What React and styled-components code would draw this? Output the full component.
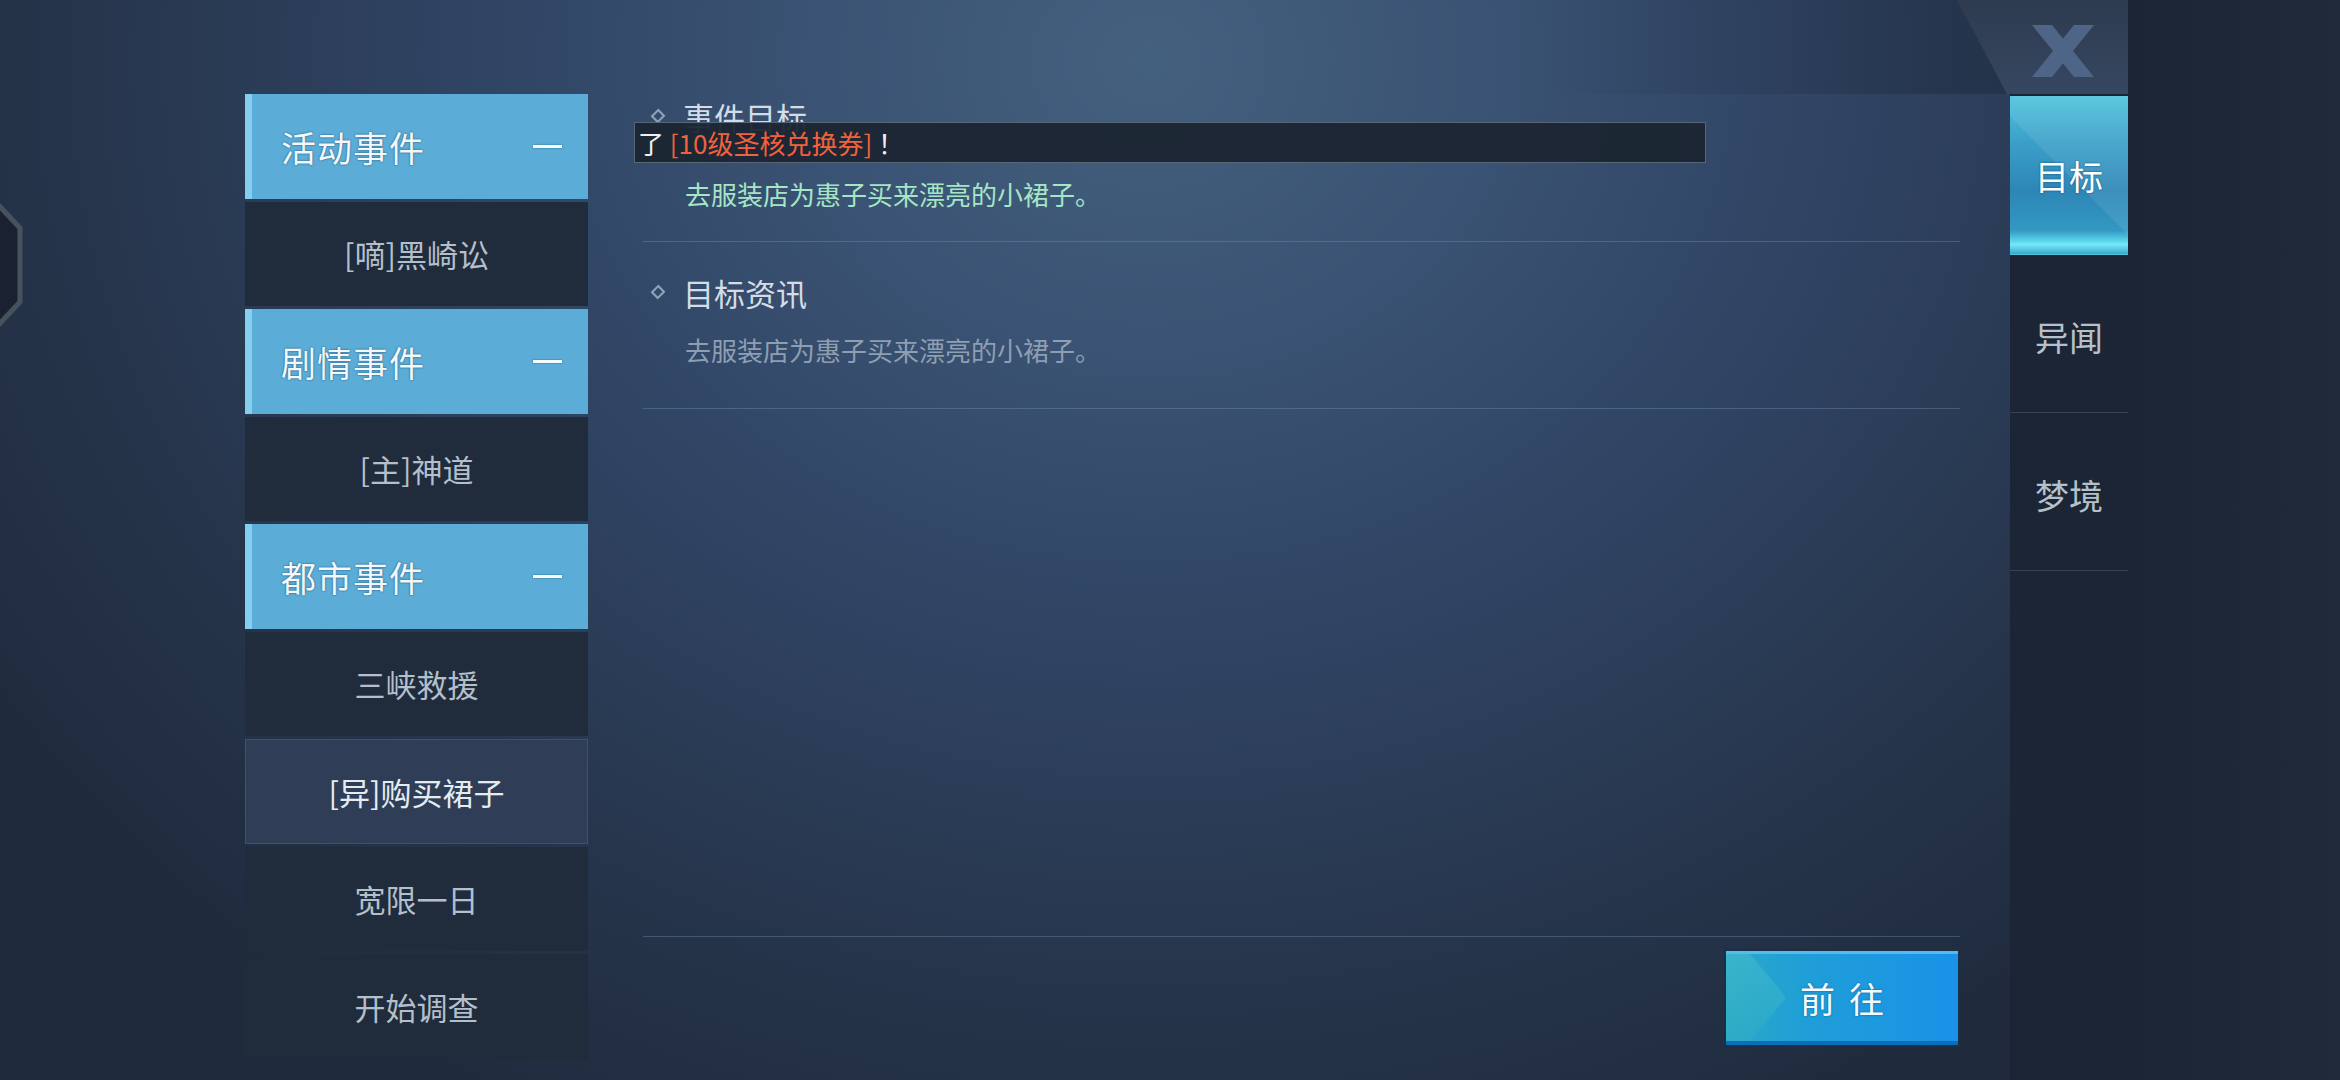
import React from "react";
import styled, { createGlobalStyle } from "styled-components";

const Global = createGlobalStyle`
  html, body { margin: 0; padding: 0; background: #1e2737; }
  body { font-family: "Noto Sans CJK SC", "Noto Sans", sans-serif; }
  * { box-sizing: border-box; }
`;

const Screen = styled.div`
  width: 2340px;
  height: 1080px;
  display: flex;
  overflow: hidden;
  background: #1e2737;
`;

const Stage = styled.div`
  width: 2128px;
  height: 1080px;
  display: flex;
  flex-direction: column;
  background:
    radial-gradient(ellipse 1400px 1200px at 1150px 60px,
      #44607f 0%, #3a5273 25%, #2f4362 50%, #27364d 75%, #1f2a3c 100%);
`;

const TopBand = styled.div`
  height: 94px;
  display: flex;
  justify-content: flex-end;
  background: linear-gradient(90deg, rgba(0,0,0,0) 72%, rgba(18,26,38,0.28) 92%);
`;

const CloseTab = styled.div`
  width: 171px;
  height: 94px;
  padding: 25px 0 0 75px;
  background: linear-gradient(180deg, #2e3b50 0%, #364760 100%);
  clip-path: polygon(0 0, 100% 0, 100% 100%, 50px 100%);
`;

const Body = styled.div`
  flex: 1;
  display: flex;
  min-height: 0;
`;

const Gutter = styled.div`
  width: 245px;
  padding-top: 100px;
`;

const Sidebar = styled.div`
  width: 343px;
  display: flex;
  flex-direction: column;
  gap: 3px;
`;

const GroupHeader = styled.div`
  height: 104.5px;
  flex-shrink: 0;
  display: flex;
  align-items: center;
  justify-content: space-between;
  padding: 0 26px 0 29px;
  background: #5badd7;
  border-left: 7px solid #84cff0;
  color: #f2f8fc;
  font-size: 35px;
  letter-spacing: 1px;
  text-shadow: 0 0 2px rgba(20, 60, 95, 0.9);
`;

const Minus = styled.span`
  width: 29px;
  height: 3px;
  background: #f4fafd;
  box-shadow: 0 0 2px rgba(20, 60, 95, 0.7);
`;

const Entry = styled.div`
  height: 104.5px;
  flex-shrink: 0;
  display: flex;
  align-items: center;
  justify-content: center;
  font-size: 31px;
  color: ${(p) => (p.$active ? "#e4ecf2" : "#b3bfcb")};
  background: ${(p) => (p.$active ? "#2f3e56" : "#202b3c")};
  border: 1px solid ${(p) => (p.$active ? "#3e5170" : "transparent")};
`;

const Main = styled.div`
  width: 1317px;
  margin-left: 55px;
  display: flex;
  flex-direction: column;
  position: relative;
`;

const Section = styled.div`
  padding: ${(p) => p.$top}px 0 ${(p) => p.$bottom}px;
  border-bottom: 1px solid rgba(125, 155, 185, 0.35);
  display: flex;
  flex-direction: column;
  gap: ${(p) => p.$gap}px;
`;

const SectionTitle = styled.div`
  height: 44px;
  display: flex;
  align-items: center;
  padding-left: 10px;
  gap: 20px;
  font-size: 31px;
  color: #d4dde6;
`;

const Diamond = styled.span`
  width: 10px;
  height: 10px;
  border: 2px solid #8ea2b8;
  transform: rotate(45deg) scale(1, 1.1);
`;

const Desc = styled.div`
  height: 36px;
  line-height: 36px;
  padding-left: 42px;
  font-size: 26px;
  color: ${(p) => (p.$green ? "#a4e6c6" : "#8e9fb2")};
`;

const Spacer = styled.div`
  flex: 1;
  border-bottom: 1px solid rgba(125, 155, 185, 0.35);
`;

const Footer = styled.div`
  display: flex;
  justify-content: flex-end;
  padding: 14px 2px 0 0;
  height: 143px;
`;

const GoButton = styled.button`
  position: relative;
  width: 232px;
  height: 94px;
  border: none;
  border-top: 3px solid #52bcf0;
  border-bottom: 4px solid #0c6db9;
  background: linear-gradient(90deg, #2aaac6 0%, #1f9ed8 35%, #1a92e8 100%);
  box-shadow: 0 0 0 2px #1a2f48;
  color: #f6fbff;
  font-family: inherit;
  font-size: 35px;
  letter-spacing: 14px;
  padding: 0 0 0 14px;
  text-shadow: 0 0 2px rgba(10, 70, 120, 0.8);
  overflow: hidden;
  &::before {
    content: "";
    position: absolute;
    left: 0;
    top: 0;
    bottom: 0;
    width: 60px;
    background: linear-gradient(180deg, #4cc0cc 0%, #32aec4 100%);
    clip-path: polygon(0 0, 40% 0, 100% 50%, 40% 100%, 0 100%);
    opacity: 0.45;
  }
  span { position: relative; }
`;

const Toast = styled.div`
  position: absolute;
  left: -9px;
  top: 28px;
  width: 1072px;
  height: 41px;
  display: flex;
  align-items: center;
  padding-left: 3px;
  background: rgba(27, 37, 50, 0.95);
  border: 1px solid #56677a;
  font-size: 26px;
  color: #f0f0f0;
  white-space: pre;
`;

const Hot = styled.span`
  color: #f3613c;
`;

const TabColumn = styled.div`
  width: 118px;
  margin-left: 50px;
  background: #1c2535;
  display: flex;
  flex-direction: column;
  padding-top: 2px;
`;

const Tab = styled.div`
  position: relative;
  height: ${(p) => (p.$active ? 159 : 158)}px;
  display: flex;
  align-items: center;
  justify-content: center;
  font-size: 34px;
  padding-top: ${(p) => (p.$active ? 0 : 6)}px;
  color: ${(p) => (p.$active ? "#ffffff" : "#b6c0cb")};
  border-bottom: 1px solid ${(p) => (p.$active ? "transparent" : "#364254")};
  background: ${(p) =>
    p.$active
      ? "linear-gradient(180deg, #4fc3dc 0%, #3a9fc8 30%, #2d86b6 60%, #3398c2 85%, #55cfe6 91%, #74e8f6 94%, #3aa8cc 100%)"
      : "transparent"};
  text-shadow: ${(p) => (p.$active ? "0 0 2px rgba(10,60,100,0.8)" : "none")};
  &::before {
    content: "";
    display: ${(p) => (p.$active ? "block" : "none")};
    position: absolute;
    inset: 0;
    background: linear-gradient(45deg, rgba(0,0,0,0) 50%, rgba(255,255,255,0.08) 50%);
  }
  span { position: relative; }
`;

const RightStrip = styled.div`
  width: 212px;
  background: linear-gradient(90deg, #1c2535 0%, #1f2838 60%, #202a3a 100%);
`;

const groups = [
  { title: "活动事件", items: ["[嘀]黑崎讼"] },
  { title: "剧情事件", items: ["[主]神道"] },
  { title: "都市事件", items: ["三峡救援", "[异]购买裙子", "宽限一日", "开始调查"] },
];

export default function App() {
  return (
    <>
      <Global />
      <Screen>
        <Stage>
          <TopBand>
            <CloseTab>
              <svg width="62" height="52" viewBox="0 0 62 52">
                <polygon points="0,0 20,0 62,52 42,52" fill="#4f6587" />
                <polygon points="42,0 62,0 20,52 0,52" fill="#4f6587" />
              </svg>
            </CloseTab>
          </TopBand>
          <Body>
            <Gutter>
              <svg width="26" height="142" viewBox="0 0 26 142">
                <path d="M -12 0 L 20 34 L 20 108 L -12 142 Z" fill="#1a2231" stroke="#48525f" strokeWidth="5" />
              </svg>
            </Gutter>
            <Sidebar>
              {groups.map((g) => (
                <React.Fragment key={g.title}>
                  <GroupHeader>
                    <span>{g.title}</span>
                    <Minus />
                  </GroupHeader>
                  {g.items.map((it) => (
                    <Entry key={it} $active={it === "[异]购买裙子"}>
                      {it}
                    </Entry>
                  ))}
                </React.Fragment>
              ))}
            </Sidebar>
            <Main>
              <Section $top={0} $bottom={29} $gap={38}>
                <SectionTitle>
                  <Diamond />
                  事件目标
                </SectionTitle>
                <Desc $green>去服装店为惠子买来漂亮的小裙子。</Desc>
              </Section>
              <Section $top={28} $bottom={40} $gap={18}>
                <SectionTitle>
                  <Diamond />
                  目标资讯
                </SectionTitle>
                <Desc>去服装店为惠子买来漂亮的小裙子。</Desc>
              </Section>
              <Spacer />
              <Footer>
                <GoButton>
                  <span>前往</span>
                </GoButton>
              </Footer>
              <Toast>
                了 <Hot>[10级圣核兑换券]</Hot> ！
              </Toast>
            </Main>
            <TabColumn>
              <Tab $active>
                <span>目标</span>
              </Tab>
              <Tab>
                <span>异闻</span>
              </Tab>
              <Tab>
                <span>梦境</span>
              </Tab>
            </TabColumn>
          </Body>
        </Stage>
        <RightStrip />
      </Screen>
    </>
  );
}
